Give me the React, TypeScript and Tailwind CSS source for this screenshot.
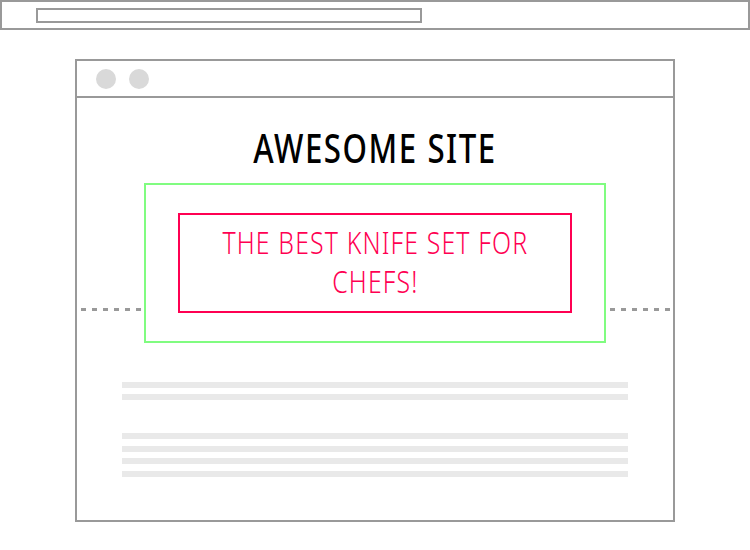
import React from 'react';

const GRAY = 'bg-[#e9e9e9]';

function Dashes() {
  return (
    <div className="flex flex-1 justify-center self-end mb-[32px] gap-[6px]">
      {[0, 1, 2, 3, 4, 5].map(i => (
        <div key={i} className="w-[5px] h-[3px] bg-[#999999]" />
      ))}
    </div>
  );
}

export default function App() {
  return (
    <div className="w-[750px] h-[550px] bg-white font-['Noto_Sans',sans-serif]">
      {/* address bar */}
      <div className="h-[30px] w-full border-2 border-[#999999] pl-[34px] pt-[6px]">
        <div className="w-[386px] h-[15px] border-2 border-[#999999]" />
      </div>

      {/* browser window */}
      <div className="mt-[29px] ml-[75px] w-[600px] h-[463px] border-2 border-[#999999] flex flex-col">
        <div className="h-[37px] border-b-2 border-[#999999] flex items-center pl-[19px] gap-[13px]">
          <div className="w-[20px] h-[20px] rounded-full bg-[#d9d9d9]" />
          <div className="w-[20px] h-[20px] rounded-full bg-[#d9d9d9]" />
        </div>

        <div className="pt-[26px] h-[74px] text-center">
          <h1 className="text-[40px] leading-[48px] tracking-[2px] font-medium scale-x-[0.78] text-black whitespace-nowrap font-['Noto_Sans',sans-serif]">
            AWESOME SITE
          </h1>
        </div>

        <div className="mt-[11px] flex">
          <Dashes />
          <div className="w-[462px] h-[160px] border-2 border-[#80fc80] flex items-center justify-center">
            <div className="w-[394px] h-[100px] border-2 border-[#ff0052] flex items-center justify-center text-center pb-[4px]">
              <p className="flex-none whitespace-nowrap text-[32px] leading-[39px] tracking-[1.5px] font-light scale-x-[0.775] text-[#ff0052] font-['Noto_Sans',sans-serif]">
                THE BEST KNIFE SET FOR
                <br />
                CHEFS!
              </p>
            </div>
          </div>
          <Dashes />
        </div>

        <div className="mt-[39px] px-[45px] flex flex-col gap-[6px]">
          <div className={`h-[6px] ${GRAY}`} />
          <div className={`h-[6px] ${GRAY}`} />
        </div>
        <div className="mt-[33px] px-[45px] flex flex-col gap-[6.67px]">
          <div className={`h-[6px] ${GRAY}`} />
          <div className={`h-[6px] ${GRAY}`} />
          <div className={`h-[6px] ${GRAY}`} />
          <div className={`h-[6px] ${GRAY}`} />
        </div>
      </div>
    </div>
  );
}
